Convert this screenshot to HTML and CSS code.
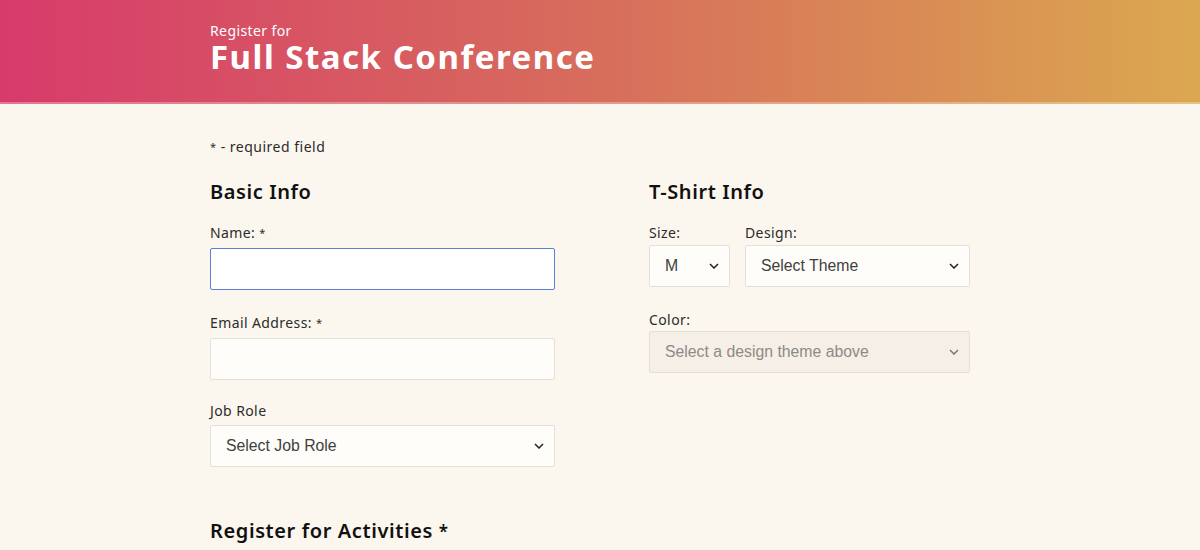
FILE: index.html
```html
<!DOCTYPE html>
<html lang="en">
<head>
<meta charset="utf-8">
<title>Register for Full Stack Conference</title>
<link rel="stylesheet" href="styles.css">
</head>
<body>
<header class="hero">
  <div class="hero-inner">
    <p class="hero-sub">Register for</p>
    <h1 class="hero-title">Full Stack Conference</h1>
  </div>
</header>
<main class="page">
  <p class="note"><span class="ast">*</span> - required field</p>
  <div class="cols">
    <section class="col col-left">
      <h2 class="sec-title">Basic Info</h2>
      <div class="field f-name">
        <label class="lbl">Name: <span class="ast">*</span></label>
        <input class="inp focus" type="text">
      </div>
      <div class="field f-email">
        <label class="lbl">Email Address: <span class="ast">*</span></label>
        <input class="inp" type="text">
      </div>
      <div class="field f-job">
        <label class="lbl">Job Role</label>
        <div class="sel">Select Job Role<svg class="chev" viewBox="0 0 10 6"><path d="M1 1l4 4 4-4"/></svg></div>
      </div>
    </section>
    <section class="col col-right">
      <h2 class="sec-title">T-Shirt Info</h2>
      <div class="row">
        <div class="field f-size">
          <label class="lbl">Size:</label>
          <div class="sel">M<svg class="chev" viewBox="0 0 10 6"><path d="M1 1l4 4 4-4"/></svg></div>
        </div>
        <div class="field f-design">
          <label class="lbl">Design:</label>
          <div class="sel">Select Theme<svg class="chev" viewBox="0 0 10 6"><path d="M1 1l4 4 4-4"/></svg></div>
        </div>
      </div>
      <div class="field f-color">
        <label class="lbl">Color:</label>
        <div class="sel disabled">Select a design theme above<svg class="chev" viewBox="0 0 10 6"><path d="M1 1l4 4 4-4"/></svg></div>
      </div>
    </section>
  </div>
  <h2 class="sec-title act">Register for Activities <span class="ast big">*</span></h2>
</main>
</body>
</html>
```
FILE: styles.css
```css
* { box-sizing: border-box; }
html, body { margin: 0; padding: 0; }
body {
  background: #fcf7ee;
  font-family: "Noto Sans", "DejaVu Sans", sans-serif;
  color: #1f1f1f;
  overflow: hidden;
}
.hero {
  height: 104px;
  background: linear-gradient(90deg, #d73b6b 0%, #d7685d 45%, #d98a55 75%, #dba850 100%);
  border-bottom: 2px solid rgba(255,255,255,0.3);
}
.hero-inner {
  padding: 23px 0 0 210px;
  color: #fff;
}
.hero-sub {
  margin: 0;
  font-size: 14px;
  line-height: 16px;
  letter-spacing: 0.4px;
}
.hero-title {
  margin: 0;
  font-size: 33px;
  line-height: 36px;
  font-weight: 700;
  letter-spacing: 1.5px;
}
.page {
  padding: 0 0 0 210px;
}
.note {
  margin: 35px 0 0;
  font-size: 14px;
  line-height: 16px;
  letter-spacing: 0.5px;
  color: #2b2b2b;
}
.ast { font-size: 11px; vertical-align: 1px; }
.ast.big { font-size: 17px; vertical-align: 0; }
.cols {
  display: flex;
  gap: 94px;
  margin-top: 24px;
}
.col-left { width: 345px; }
.col-right { width: 321px; }
.sec-title {
  margin: 0 0 20px;
  font-size: 20px;
  line-height: 26px;
  font-weight: 600;
  letter-spacing: 0.6px;
  color: #111;
}
.field { margin-bottom: 25px; }
.f-name .lbl { margin-bottom: 7px; }
.f-email { margin-top: 1px; }
.f-email .lbl { margin-bottom: 7px; }
.f-job { margin-top: -2px; margin-bottom: 25px; }
.lbl {
  display: block;
  font-size: 14px;
  line-height: 16px;
  letter-spacing: 0.4px;
  color: #2b2b2b;
  margin-bottom: 6px;
}
.inp {
  display: block;
  width: 100%;
  height: 42px;
  border: 1px solid #e5e0d7;
  border-radius: 2px;
  background: #fffdf9;
  outline: none;
}
.inp.focus {
  border-color: #5b7fd4;
  background: #fff;
}
.sel {
  display: flex;
  align-items: center;
  justify-content: space-between;
  height: 42px;
  padding: 0 10px 0 15px;
  border: 1px solid #e5e0d7;
  border-radius: 2px;
  background: #fffdf9;
  font-family: "Liberation Sans", Arial, sans-serif;
  font-size: 15.8px;
  color: #404040;
}
.chev {
  width: 10px;
  height: 6px;
  fill: none;
  stroke: #222;
  stroke-width: 1.5;
}
.sel.disabled {
  background: #f5efe7;
  color: #8e8a86;
}
.sel.disabled .chev { stroke: #777; }
.row {
  display: flex;
  gap: 15px;
}
.f-size { width: 81px; }
.f-design { width: 225px; }
.col-right .field { margin-bottom: 25px; }
.col-right .lbl { margin-bottom: 4px; }
.col-right .f-color .lbl { margin-bottom: 3px; }
.act { margin-top: 26px; }
```
